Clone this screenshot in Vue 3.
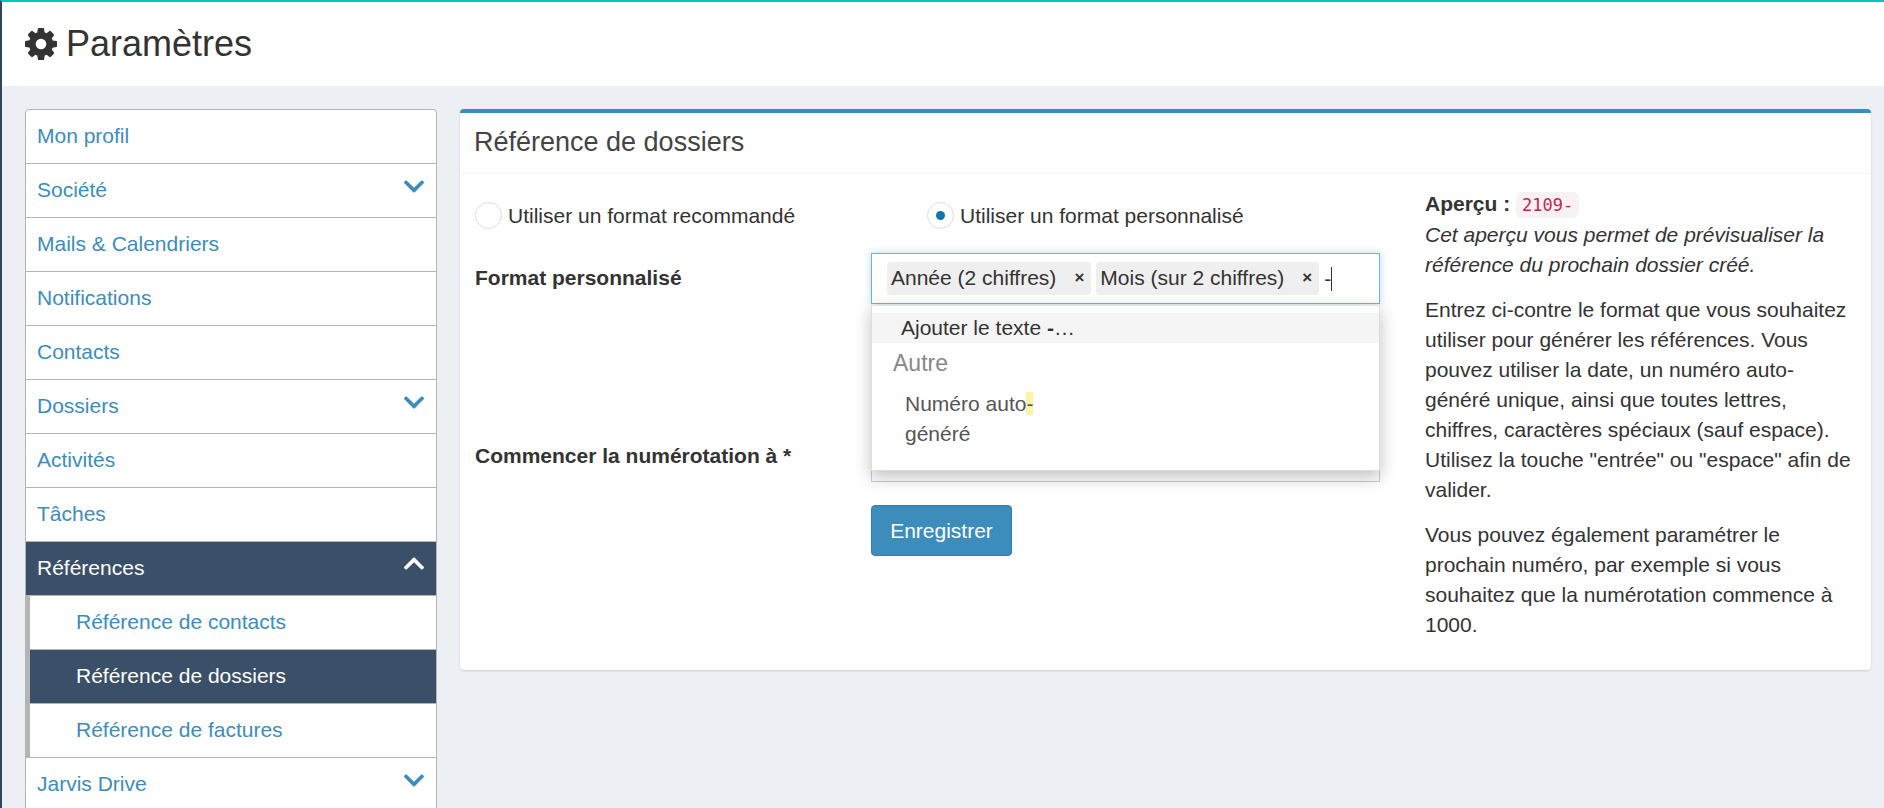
<template>
  <div class="app">
    <header class="page-header">
      <svg class="gear" viewBox="0 128 1536 1536"><path :d="gearPath" /></svg>
      <h1>Paramètres</h1>
    </header>

    <div class="content">
      <nav class="side-menu">
        <a
          v-for="item in menu"
          :key="item.label"
          class="menu-item"
          :class="{ active: item.active, sub: item.sub }"
        >
          <span>{{ item.label }}</span>
          <svg v-if="item.chevron" class="chevron" :class="{ up: item.chevron === 'up' }" viewBox="5 124 438 264">
            <path :d="chevronPath" />
          </svg>
        </a>
      </nav>

      <section class="card">
        <h3 class="card-title">Référence de dossiers</h3>
        <div class="card-body">
          <form class="settings-form" @submit.prevent>
            <div class="radio-row">
              <label class="radio-option">
                <span class="radio"></span>
                Utiliser un format recommandé
              </label>
              <label class="radio-option">
                <span class="radio checked"></span>
                Utiliser un format personnalisé
              </label>
            </div>

            <div class="field format-field">
              <label class="field-label">Format personnalisé</label>
              <div class="tag-select">
                <div class="tag-box">
                  <span v-for="tag in tags" :key="tag" class="tag">
                    {{ tag }}<b class="tag-remove">×</b>
                  </span>
                  <span class="typed">-</span>
                </div>
                <div class="dropdown">
                  <div class="add-text">Ajouter le texte <b>-</b>…</div>
                  <div class="group-title">Autre</div>
                  <div class="option">Numéro auto<mark>-</mark> généré</div>
                </div>
              </div>
            </div>

            <div class="field number-field">
              <label class="field-label">Commencer la numérotation à *</label>
              <div class="number-input"></div>
            </div>

            <button class="save-btn" type="submit">Enregistrer</button>
          </form>

          <aside class="help">
            <p>
              <strong>Aperçu :</strong> <code>2109-</code><br />
              <em>Cet aperçu vous permet de prévisualiser la référence du prochain dossier créé.</em>
            </p>
            <p>
              Entrez ci-contre le format que vous souhaitez utiliser pour générer les références. Vous
              pouvez utiliser la date, un numéro auto-généré unique, ainsi que toutes lettres, chiffres,
              caractères spéciaux (sauf espace). Utilisez la touche "entrée" ou "espace" afin de valider.
            </p>
            <p>
              Vous pouvez également paramétrer le prochain numéro, par exemple si vous souhaitez que la
              numérotation commence à 1000.
            </p>
          </aside>
        </div>
      </section>
    </div>
  </div>
</template>

<script setup>
const gearPath =
  'M1024 896q0-106-75-181t-181-75-181 75-75 181 75 181 181 75 181-75 75-181zm512-109v222q0 12-8 23t-20 13l-185 28q-19 54-39 91 35 50 107 138 10 12 10 25t-9 23q-27 37-99 108t-94 71q-12 0-26-9l-138-108q-44 23-91 38-16 136-29 186-7 28-36 28h-222q-14 0-24.5-8.5t-11.5-21.5l-28-184q-49-16-90-37l-141 107q-10 9-25 9-14 0-25-11-126-114-165-168-7-10-7-23 0-12 8-23 15-21 51-66.5t54-70.5q-27-50-41-99l-183-27q-13-2-21-12.5t-8-23.5v-222q0-12 8-23t19-13l186-28q14-46 39-92-40-57-107-138-10-12-10-24 0-10 9-23 26-36 98.5-107.5t94.5-71.5q13 0 26 10l138 107q44-23 91-38 16-136 29-186 7-28 36-28h222q14 0 24.5 8.5t11.5 21.5l28 184q49 16 90 37l142-107q9-9 24-9 13 0 25 10 129 119 165 170 7 8 7 22 0 12-8 23-15 21-51 66.5t-54 70.5q26 50 41 98l183 28q13 2 21 12.5t8 23.5z';

const chevronPath =
  'M207.029 381.476L12.686 187.132c-9.373-9.373-9.373-24.569 0-33.941l22.667-22.667c9.357-9.357 24.522-9.375 33.901-.04L224 284.505l154.745-154.021c9.379-9.335 24.544-9.317 33.901.04l22.667 22.667c9.373 9.373 9.373 24.569 0 33.941L240.971 381.476c-9.373 9.372-24.569 9.372-33.942 0z';

const menu = [
  { label: 'Mon profil' },
  { label: 'Société', chevron: 'down' },
  { label: 'Mails & Calendriers' },
  { label: 'Notifications' },
  { label: 'Contacts' },
  { label: 'Dossiers', chevron: 'down' },
  { label: 'Activités' },
  { label: 'Tâches' },
  { label: 'Références', chevron: 'up', active: true },
  { label: 'Référence de contacts', sub: true },
  { label: 'Référence de dossiers', sub: true, active: true },
  { label: 'Référence de factures', sub: true },
  { label: 'Jarvis Drive', chevron: 'down' },
];

const tags = ['Année (2 chiffres)', 'Mois (sur 2 chiffres)'];
</script>

<style>
html,
body {
  margin: 0;
  background: #ecf0f5;
}
</style>

<style scoped>
.app {
  height: 806px;
  overflow: hidden;
  border-top: 2px solid #00c7be;
  border-left: 2px solid #2f4560;
  font-family: "Liberation Sans", Arial, sans-serif;
  font-size: 21px;
  line-height: 30px;
  color: #333;
  background: #ecf0f5;
}

.page-header {
  display: flex;
  align-items: center;
  gap: 9px;
  height: 84px;
  padding-left: 23px;
  background: #fff;
}

.gear {
  width: 32px;
  height: 32px;
  fill: #333;
}

h1 {
  margin: 0;
  font-size: 36px;
  font-weight: 400;
  line-height: 40px;
}

.content {
  display: flex;
  align-items: flex-start;
  gap: 23px;
  padding: 23px 13px 0 23px;
}

.side-menu {
  flex: none;
  width: 412px;
  border: 1px solid #b4b4b4;
  border-radius: 4px;
  box-sizing: border-box;
  background: #fff;
  overflow: hidden;
}

.menu-item {
  display: flex;
  justify-content: space-between;
  height: 54px;
  box-sizing: border-box;
  padding: 11px 12px 0 11px;
  border-top: 1px solid #b4b4b4;
  color: #3c8dbc;
}

.menu-item:first-child {
  border-top: 0;
  height: 53px;
}

.menu-item.sub {
  padding-left: 46px;
  border-left: 4px solid #b4b4b4;
}

.menu-item.active {
  background: #3a5068;
  color: #fff;
}

.chevron {
  width: 20px;
  height: 13px;
  margin-top: 5px;
  fill: #3c8dbc;
}

.chevron.up {
  margin-top: 4px;
  fill: #fff;
  transform: rotate(180deg);
}

.card {
  flex: 1;
  min-width: 0;
  border-top: 4px solid #3c8dbc;
  border-radius: 4px;
  background: #fff;
  box-shadow: 0 1px 2px rgba(0, 0, 0, 0.15);
}

.card-title {
  height: 61px;
  box-sizing: border-box;
  margin: 0;
  padding: 10px 14px 0;
  border-bottom: 1px solid #f4f4f4;
  font-size: 27px;
  font-weight: 400;
  line-height: 38px;
  color: #444;
}

.card-body {
  display: flex;
  padding: 0 15px 0;
}

.settings-form {
  flex: none;
  width: 950px;
  padding-top: 28px;
}

.radio-row {
  display: flex;
  height: 51px;
}

.radio-option {
  display: flex;
  align-items: flex-start;
  gap: 6px;
  width: 452px;
  line-height: 28px;
}

.radio {
  position: relative;
  flex: none;
  width: 27px;
  height: 27px;
  box-sizing: border-box;
  border: 1px solid #ddd;
  border-radius: 50%;
}

.radio.checked::after {
  content: "";
  position: absolute;
  left: 8px;
  top: 8px;
  width: 9px;
  height: 9px;
  border-radius: 50%;
  background: #0d77ad;
}

.field {
  display: flex;
}

.field-label {
  flex: none;
  width: 396px;
  font-weight: 700;
}

.format-field {
  height: 177px;
}

.format-field .field-label {
  padding-top: 10px;
}

.number-field {
  height: 52px;
}

.number-field .field-label {
  padding-top: 11px;
}

.tag-select {
  position: relative;
  z-index: 1;
  width: 509px;
}

.tag-box {
  display: flex;
  align-items: center;
  gap: 5px;
  height: 51px;
  box-sizing: border-box;
  padding: 0 15px;
  border: 1px solid #6fb0e4;
  box-shadow: 0 0 8px rgba(102, 175, 233, 0.45);
  background: #fff;
}

.tag {
  display: flex;
  align-items: center;
  justify-content: space-between;
  height: 33px;
  padding: 0 7px 1px 4px;
  box-sizing: border-box;
  gap: 18px;
  border-radius: 4px;
  background: #efefef;
}

.tag-remove {
  font-size: 17px;
  color: #333;
}

.typed {
  border-right: 1px solid #333;
  height: 24px;
  line-height: 24px;
}

.dropdown {
  position: absolute;
  left: 0;
  right: 0;
  top: 52px;
  height: 166px;
  box-sizing: border-box;
  padding-top: 7px;
  border: 1px solid #ddd;
  border-top-color: #e6e6e6;
  background: #fff;
  box-shadow: 0 6px 16px rgba(0, 0, 0, 0.25);
}

.add-text {
  height: 30px;
  padding-left: 29px;
  background: #f5f5f5;
}

.group-title {
  padding: 5px 0 0 21px;
  font-size: 23px;
  line-height: 30px;
  color: #888;
}

.option {
  width: 165px;
  margin-top: 11px;
  padding-left: 33px;
  color: #555;
}

.option mark {
  background: #fff3a8;
  color: inherit;
}

.number-input {
  width: 509px;
  height: 52px;
  box-sizing: border-box;
  border: 1px solid #c8cbdd;
}

.save-btn {
  display: block;
  width: 141px;
  height: 51px;
  margin: 23px 0 0 396px;
  border: 1px solid #367fa9;
  border-radius: 4px;
  background: #3c8dbc;
  color: #fff;
  font: inherit;
}

.help {
  width: 431px;
  padding: 15px 0 15px;
  color: #333;
}

.help p {
  margin: 0 0 15px;
}

.help strong {
  font-weight: 700;
}

code {
  padding: 3px 6px;
  border-radius: 6px;
  background: #f9f2f4;
  color: #c7254e;
  font-family: "DejaVu Sans Mono", monospace;
  font-size: 17px;
}
</style>
